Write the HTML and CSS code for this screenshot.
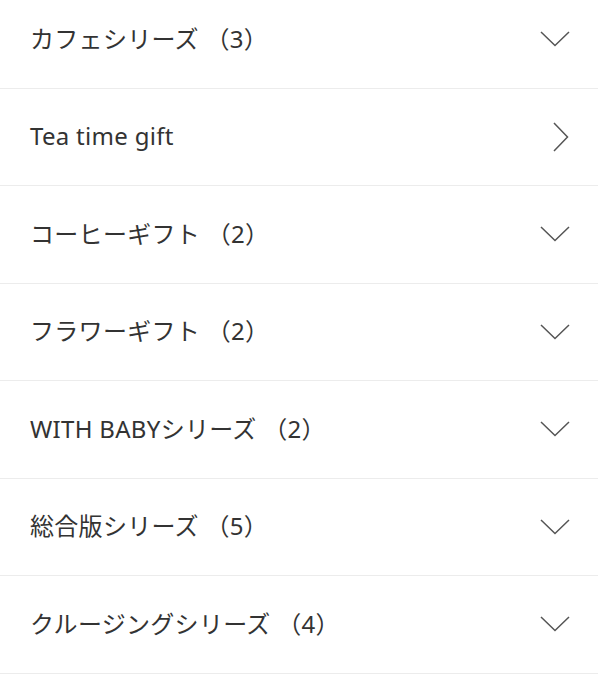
FILE: index.html
```html
<!DOCTYPE html>
<html lang="ja">
<head>
  <meta charset="UTF-8">
  <meta name="viewport" content="width=device-width, initial-scale=1.0">
  <title>ギフトシリーズ</title>
  <link rel="stylesheet" href="styles.css">
</head>
<body>
  <ul class="series-list">
    <li class="series-item">
      <span class="series-name">カフェシリーズ （3）</span>
      <svg class="chevron chevron-down" viewBox="0 0 30 16"><polyline points="1,1 15,14.5 29,1"/></svg>
    </li>
    <li class="series-item">
      <span class="series-name">Tea time gift</span>
      <svg class="chevron chevron-right" viewBox="0 0 16 30"><polyline points="1,1 14.5,15 1,29"/></svg>
    </li>
    <li class="series-item">
      <span class="series-name">コーヒーギフト （2）</span>
      <svg class="chevron chevron-down" viewBox="0 0 30 16"><polyline points="1,1 15,14.5 29,1"/></svg>
    </li>
    <li class="series-item">
      <span class="series-name">フラワーギフト （2）</span>
      <svg class="chevron chevron-down" viewBox="0 0 30 16"><polyline points="1,1 15,14.5 29,1"/></svg>
    </li>
    <li class="series-item">
      <span class="series-name">WITH BABYシリーズ （2）</span>
      <svg class="chevron chevron-down" viewBox="0 0 30 16"><polyline points="1,1 15,14.5 29,1"/></svg>
    </li>
    <li class="series-item">
      <span class="series-name">総合版シリーズ （5）</span>
      <svg class="chevron chevron-down" viewBox="0 0 30 16"><polyline points="1,1 15,14.5 29,1"/></svg>
    </li>
    <li class="series-item">
      <span class="series-name">クルージングシリーズ （4）</span>
      <svg class="chevron chevron-down" viewBox="0 0 30 16"><polyline points="1,1 15,14.5 29,1"/></svg>
    </li>
  </ul>
</body>
</html>
```

FILE: styles.css
```css
body {
  margin: 0;
  padding: 0;
  background: #fff;
  font-family: 'Noto Sans', 'Noto Sans CJK JP', sans-serif;
  color: #333;
}
.series-list {
  list-style: none;
  margin: -9px 0 0;
  padding: 0;
}
.series-item {
  display: flex;
  align-items: center;
  justify-content: space-between;
  height: 96.5px;
  padding: 0 28px 0 30px;
  border-bottom: 1px solid #ececec;
  cursor: pointer;
}
.series-name {
  font-size: 24px;
  line-height: 1.2;
  letter-spacing: 0.3px;
}
.chevron {
  fill: none;
  stroke: #555;
  stroke-width: 1.5;
}
.chevron-down {
  width: 30px;
  height: 16px;
}
.chevron-right {
  width: 16px;
  height: 30px;
  margin-right: 1px;
}
```
